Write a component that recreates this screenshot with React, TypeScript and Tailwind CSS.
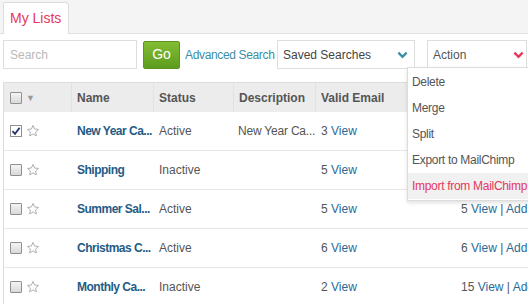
import React from 'react'

type Row = {
  name: string
  status: string
  description: string
  valid: number
  total?: number
  checked?: boolean
}

// last column of the first two rows sits under the open Action menu
const rows: Row[] = [
  { name: 'New Year Ca...', status: 'Active', description: 'New Year Ca...', valid: 3, checked: true },
  { name: 'Shipping', status: 'Inactive', description: '', valid: 5 },
  { name: 'Summer Sal...', status: 'Active', description: '', valid: 5, total: 5 },
  { name: 'Christmas C...', status: 'Active', description: '', valid: 6, total: 6 },
  { name: 'Monthly Ca...', status: 'Inactive', description: '', valid: 2, total: 15 },
]

const menuItems = ['Delete', 'Merge', 'Split', 'Export to MailChimp']

const Checkbox = ({ checked }: { checked?: boolean }) => (
  <span className="relative inline-block w-[12px] h-[12px] border border-[#8f8f8f] bg-gradient-to-b from-[#f4f4f4] to-[#d9d9d9] rounded-[1px]">
    {checked && (
      <svg viewBox="0 0 12 12" className="absolute -left-px -top-px w-[12px] h-[12px]">
        <rect x="0.5" y="0.5" width="11" height="11" fill="#fff" stroke="#8f8f8f" />
        <path d="M2.5 6.2 L5 8.8 L9.6 2.8" fill="none" stroke="#23306e" strokeWidth="1.8" />
      </svg>
    )}
  </span>
)

const Star = () => (
  <svg viewBox="0 0 24 24" className="w-[14px] h-[14px]">
    <path
      d="M12 2.5 L14.8 8.6 L21.4 9.3 L16.4 13.8 L17.8 20.4 L12 17 L6.2 20.4 L7.6 13.8 L2.6 9.3 L9.2 8.6 Z"
      fill="#fff"
      stroke="#a9a9a9"
      strokeWidth="1.6"
      strokeLinejoin="round"
    />
  </svg>
)

const Chevron = ({ color }: { color: string }) => (
  <svg viewBox="0 0 12 8" className="w-[11px] h-[8px]">
    <path d="M1.5 1.5 L6 6 L10.5 1.5" fill="none" stroke={color} strokeWidth="2.6" />
  </svg>
)

export default function App() {
  return (
    <div className="w-[528px] h-[304px] overflow-hidden bg-white relative font-['Liberation_Sans',Arial,sans-serif] text-[12px] text-[#555]">
      {/* tab strip */}
      <div className="h-[34px] bg-[#f4f4f4] border-b border-[#e2e2e2] flex items-end pl-[3px]">
        <div className="h-[32px] w-[66px] bg-white border border-b-0 border-[#dcdcdc] rounded-tr-[4px] rounded-tl-[2px] -mb-px flex items-center pl-[6px] text-[14px] text-[#e5375e]">
          My Lists
        </div>
      </div>

      {/* search toolbar */}
      <div className="flex items-center h-[29px] mt-[6px] pl-[3px] w-[640px]">
        <div className="shrink-0 w-[134px] h-[29px] border border-[#dedede] flex items-center pl-[6px] text-[12px] text-[#b9b9b9]">
          Search
        </div>
        <div className="shrink-0 ml-[6px] w-[37px] h-[28px] rounded-[2px] border border-[#5c9320] bg-gradient-to-b from-[#82bd32] to-[#5d9c1e] flex items-center justify-center text-[14px] text-white">
          Go
        </div>
        <span className="shrink-0 w-[87px] ml-[5px] text-[#3a8fa6] text-[12px] whitespace-nowrap tracking-[-0.35px]">Advanced Search</span>
        <div className="shrink-0 ml-[5px] w-[138px] h-[29px] border border-[#dedede] flex items-center justify-between pl-[5px] pr-[6px] text-[#444]">
          <span>Saved Searches</span>
          <Chevron color="#3a8fa6" />
        </div>
        <div className="shrink-0 ml-[12px] w-[100px] h-[29px] border border-[#dedede] flex items-center justify-between pl-[5px] pr-[2px] text-[#555]">
          <span>Action</span>
          <Chevron color="#e5375e" />
        </div>
      </div>

      {/* table */}
      <div className="mt-[13px] ml-[3px] border-l border-t border-[#dcdcdc] w-[600px]">
        <div className="flex h-[29px] bg-[#ececec] font-bold text-[#555] items-center">
          <div className="w-[67px] h-full flex items-center pl-[6px] gap-[4px]">
            <Checkbox />
            <span className="text-[#9a9a9a] text-[9px] mt-[2px]">▼</span>
          </div>
          <div className="w-[82px] h-full border-l border-[#e2e2e2] flex items-center pl-[5px]">Name</div>
          <div className="w-[80px] h-full border-l border-[#e2e2e2] flex items-center pl-[5px]">Status</div>
          <div className="w-[82px] h-full border-l border-[#e2e2e2] flex items-center pl-[5px]">Description</div>
          <div className="w-[141px] h-full border-l border-[#e2e2e2] flex items-center pl-[5px]">Valid Email</div>
          <div className="flex-1 h-full border-l border-[#e2e2e2]" />
        </div>
        {rows.map((r) => (
          <div key={r.name} className="flex h-[39px] items-center border-b border-[#e6e6e6]">
            <div className="w-[67px] flex items-center pl-[6px] gap-[4px]">
              <Checkbox checked={r.checked} />
              <Star />
            </div>
            <div className="w-[82px] pl-[6px] font-bold text-[#245b86] whitespace-nowrap tracking-[-0.5px]">{r.name}</div>
            <div className="w-[80px] pl-[6px]">{r.status}</div>
            <div className="w-[82px] pl-[5px] whitespace-nowrap tracking-[-0.2px]">{r.description}</div>
            <div className="w-[141px] pl-[6px] text-[#2b6a98]">
              <span className="text-[#555]">{r.valid}</span> View
            </div>
            <div className="flex-1 pl-[5px] whitespace-nowrap text-[#2b6a98]">
              {r.total !== undefined && (
                <>
                  <span className="text-[#555]">{r.total}</span> View<span className="text-[#555]"> | </span> Add Contacts
                </>
              )}
            </div>
          </div>
        ))}
      </div>

      {/* action menu */}
      <div className="absolute left-[407px] top-[67px] w-[130px] bg-white border border-[#dcdcdc] shadow-[0_2px_4px_rgba(0,0,0,0.12)] py-[1px] tracking-[-0.3px]">
        {menuItems.map((m) => (
          <div key={m} className="h-[26px] flex items-center pl-[4px] text-[#555]">
            {m}
          </div>
        ))}
        <div className="h-[26px] flex items-center pl-[4px] bg-[#f1f1f1] text-[#e5375e]">Import from MailChimp</div>
      </div>
    </div>
  )
}
